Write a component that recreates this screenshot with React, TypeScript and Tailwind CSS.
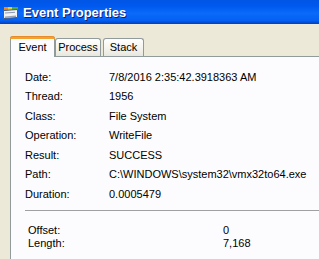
import React from "react";

const rows: [string, string][] = [
  ["Date:", "7/8/2016 2:35:42.3918363 AM"],
  ["Thread:", "1956"],
  ["Class:", "File System"],
  ["Operation:", "WriteFile"],
  ["Result:", "SUCCESS"],
  ["Path:", "C:\\WINDOWS\\system32\\vmx32to64.exe"],
  ["Duration:", "0.0005479"],
];

function TitleIcon() {
  return (
    <svg width="17" height="16" viewBox="0 0 17 16">
      <rect x="2" y="3" width="4" height="3" fill="#F08A1C" />
      <rect x="6" y="3" width="4" height="3" fill="#E8C93A" />
      <rect x="10" y="3" width="6" height="3" fill="#4FA83A" />
      <path d="M1.5 6.5 L15.5 5.5 L15.5 13.5 L1.5 14.5 Z" fill="#F2F2F2" stroke="#4A5A78" />
      <path d="M3 9 L13 8.3" stroke="#8C98B0" strokeWidth="1" />
      <path d="M3 12.5 L14 11.5 L14 13 L3 14 Z" fill="#9AA2B2" />
    </svg>
  );
}

export default function App() {
  return (
    <div
      className="w-[319px] h-[259px] overflow-hidden flex flex-col bg-[#ECE9D8]"
      style={{ fontFamily: '"Liberation Sans", Arial, sans-serif' }}
    >
      {/* Title bar */}
      <div className="h-[24px] flex items-center gap-[4px] pl-[2px] bg-[linear-gradient(to_bottom,#0055E5_0%,#0058EE_25%,#0A6AFA_55%,#0560F2_85%,#003FC0_100%)]">
        <TitleIcon />
        <span className="text-white font-bold text-[13px] leading-none [text-shadow:1px_1px_0_#0A1F7A]">
          Event Properties
        </span>
      </div>

      {/* Tabs area */}
      <div className="h-[32px] flex items-end pl-[10px]">
        <div className="relative h-[21px] w-[45px] bg-[#FCFCFE] border-l border-r border-[#919B9C] rounded-t-[3px] flex items-center justify-center text-[11px] text-black z-10 -mb-px">
          <div className="absolute left-[-1px] right-[-1px] top-0 h-[3px] rounded-t-[3px] bg-[#F4A22E] border-t border-[#E68B2C]" />
          <span className="mt-[2px]">Event</span>
        </div>
        <div className="h-[18px] w-[46px] bg-[linear-gradient(to_bottom,#FFFFFF,#F3F2EC_60%,#E8E7DF)] border border-b-0 border-[#919B9C] rounded-t-[3px] flex items-center justify-center text-[11px] text-black">
          Process
        </div>
        <div className="h-[18px] w-[41px] ml-[2px] bg-[linear-gradient(to_bottom,#FFFFFF,#F3F2EC_60%,#E8E7DF)] border border-b-0 border-[#919B9C] rounded-t-[3px] flex items-center justify-center text-[11px] text-black">
          Stack
        </div>
      </div>

      {/* Panel */}
      <div className="flex-1 ml-[10px] bg-[#FCFCFE] border-l border-t border-[#919B9C] pt-[10px] text-[11px] text-black">
        <div className="flex flex-col pl-[14px]">
          {rows.map(([k, v]) => (
            <div key={k} className="h-[19.5px] flex items-center">
              <span className="w-[84px] shrink-0">{k}</span>
              <span className="whitespace-nowrap">{v}</span>
            </div>
          ))}
        </div>
        <div className="ml-[14px] mt-[6px] h-px bg-[#A0A0A0]" />
        <div className="pl-[17px] pt-[13px] leading-[13px]">
          <div className="flex">
            <span className="w-[195px] shrink-0">Offset:</span>
            <span>0</span>
          </div>
          <div className="flex">
            <span className="w-[195px] shrink-0">Length:</span>
            <span>7,168</span>
          </div>
        </div>
      </div>
    </div>
  );
}
